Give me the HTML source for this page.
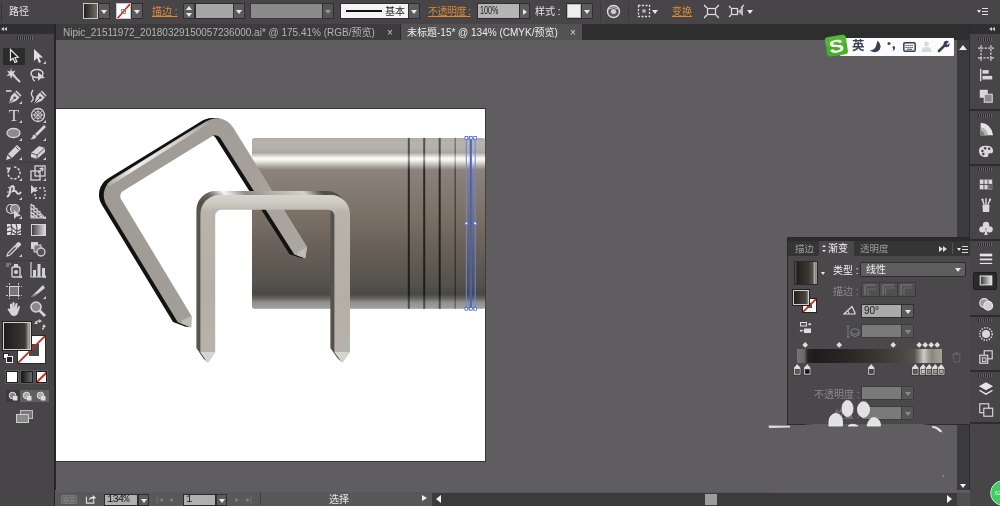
<!DOCTYPE html>
<html><head><meta charset="utf-8">
<style>
*{box-sizing:border-box;margin:0;padding:0}
html,body{width:1000px;height:506px;overflow:hidden;background:#5f5d60;font-family:"Liberation Sans","Noto Sans CJK SC",sans-serif;font-size:11px;color:#ddd}
.abs,#root div,#root span,#root svg,#root i{position:absolute}
#root{position:relative;width:1000px;height:506px;overflow:hidden;background:#5f5d60;transform:translateZ(0);will-change:transform}
#ctrl{left:0;top:0;width:1000px;height:24.500px;background:#474548;border-bottom:1px solid #2a2a2a}
#tabs{left:55px;top:24px;width:915px;height:16px;background:#2e2e2e}
#tabs span{top:0;height:16px;font-size:10px;line-height:17.500px;white-space:nowrap}
#tools{left:0;top:24px;width:55.500px;height:482px;background:#474548;border-right:2px solid #252525}
#dock{left:969px;top:24px;width:31px;height:482px;background:#474548;border-left:1px solid #2c2c2c}
#artboard{left:56px;top:108px;width:430px;height:354px;background:#fff;border:1px solid #353535;border-left:none}
.or{color:#dd8a33;text-decoration:underline;font-size:10px;white-space:nowrap}
.lb{color:#e4e4e4;font-size:10px;white-space:nowrap}
.fld{background:#a6a6a6;border:1px solid #2f2f2f}
.fldd{background:#8a8a8a;border:1px solid #3a3a3a}
.btn{background:#5c5c5c;border:1px solid #2f2f2f}
.td{width:0;height:0;border-left:3px solid transparent;border-right:3px solid transparent;border-top:4px solid #e8e8e8}
.tu{width:0;height:0;border-left:3px solid transparent;border-right:3px solid transparent;border-bottom:4px solid #e8e8e8}
.tr{width:0;height:0;border-top:3px solid transparent;border-bottom:3px solid transparent;border-left:4px solid #e8e8e8}
.tl{width:0;height:0;border-top:3px solid transparent;border-bottom:3px solid transparent;border-right:4px solid #e8e8e8}
.grip{height:3px;width:14px;background:repeating-linear-gradient(90deg,#2a2a2a 0 1px,#666 1px 2px)}
.sep{height:1px;background:#2c2c2c}
</style></head><body><div id="root">
<div id="artboard"></div>
<svg id="art" style="left:0;top:0" width="1000" height="506" viewBox="0 0 1000 506">
<defs>
 <linearGradient id="gcyl" x1="0" y1="0" x2="0" y2="1">
  <stop offset="0" stop-color="#b1aca8"/>
  <stop offset="0.03" stop-color="#b6b2ad"/>
  <stop offset="0.06" stop-color="#b4b0aa"/>
  <stop offset="0.086" stop-color="#a9a6a0"/>
  <stop offset="0.104" stop-color="#d6d4ce"/>
  <stop offset="0.12" stop-color="#fbfbf9"/>
  <stop offset="0.135" stop-color="#eeede8"/>
  <stop offset="0.15" stop-color="#cfccc4"/>
  <stop offset="0.172" stop-color="#a59e94"/>
  <stop offset="0.187" stop-color="#8b837c"/>
  <stop offset="0.47" stop-color="#796f65"/>
  <stop offset="0.77" stop-color="#5c5750"/>
  <stop offset="0.86" stop-color="#53524c"/>
  <stop offset="0.915" stop-color="#4b4743"/>
  <stop offset="0.94" stop-color="#666662"/>
  <stop offset="0.963" stop-color="#8f918c"/>
  <stop offset="0.99" stop-color="#9c9e99"/>
  <stop offset="1" stop-color="#9a9c97"/>
 </linearGradient>
 <linearGradient id="gline" x1="0" y1="0" x2="0" y2="1">
  <stop offset="0" stop-color="#55524e"/>
  <stop offset="0.086" stop-color="#504d49"/>
  <stop offset="0.12" stop-color="#9a9894"/>
  <stop offset="0.187" stop-color="#2c2926"/>
  <stop offset="0.915" stop-color="#1c1b1a"/>
  <stop offset="0.963" stop-color="#4a4a47"/>
  <stop offset="1" stop-color="#4d4d4a"/>
 </linearGradient>
 <linearGradient id="gtop" gradientUnits="userSpaceOnUse" x1="196" y1="0" x2="350" y2="0">
  <stop offset="0" stop-color="#5a5752"/>
  <stop offset="0.05" stop-color="#55524d"/>
  <stop offset="0.1" stop-color="#6a6864"/>
  <stop offset="0.2" stop-color="#f6f6f4"/>
  <stop offset="0.34" stop-color="#8c8b88"/>
  <stop offset="0.5" stop-color="#b0afab"/>
  <stop offset="0.72" stop-color="#d2d1ce"/>
  <stop offset="0.84" stop-color="#4c4b48"/>
  <stop offset="0.9" stop-color="#55524d"/>
  <stop offset="1" stop-color="#3a3937"/>
 </linearGradient>
 <linearGradient id="gfront" gradientUnits="userSpaceOnUse" x1="0" y1="195" x2="0" y2="363">
  <stop offset="0" stop-color="#d8d5cd"/>
  <stop offset="0.05" stop-color="#cdc9c1"/>
  <stop offset="0.1" stop-color="#b9b4ab"/>
  <stop offset="0.6" stop-color="#b4aea5"/>
  <stop offset="1" stop-color="#b9b4ab"/>
 </linearGradient>
 <path id="stf" d="M200.400 352 L200.400 214 A19 19 0 0 1 219.400 195 L331 195 A19 19 0 0 1 350 214 L350 352 L342.200 362.800 L334.400 352 L334.400 216.200 A6.500 6.500 0 0 0 327.900 209.700 L221.700 209.700 A6.500 6.500 0 0 0 215.200 216.200 L215.200 352 L207.800 362.800 L200.400 352 Z"/>
 <linearGradient id="gbk" gradientUnits="userSpaceOnUse" x1="100" y1="190" x2="300" y2="250">
  <stop offset="0" stop-color="#9f9a93"/>
  <stop offset="0.5" stop-color="#a29d96"/>
  <stop offset="1" stop-color="#aba69f"/>
 </linearGradient>
 <linearGradient id="ghl" gradientUnits="userSpaceOnUse" x1="104" y1="183" x2="210" y2="116">
  <stop offset="0" stop-color="#fff" stop-opacity="0.1"/>
  <stop offset="0.25" stop-color="#fff" stop-opacity="0.85"/>
  <stop offset="0.7" stop-color="#fff" stop-opacity="0.5"/>
  <stop offset="1" stop-color="#fff" stop-opacity="0"/>
 </linearGradient>
</defs>
<!-- cylinder -->
<rect x="252" y="137.900" width="233.200" height="170.900" rx="2.500" fill="url(#gcyl)"/>
<g fill="url(#gline)">
 <rect x="407.800" y="137.900" width="2" height="170.900"/>
 <rect x="423.200" y="137.900" width="2" height="170.900"/>
 <rect x="438.700" y="137.900" width="2" height="170.900"/>
 <rect x="454.600" y="137.900" width="1.200" height="170.900" opacity="0.75"/>
</g>
<!-- selected object -->
<g fill="none">
 <rect x="466.300" y="137.900" width="8.900" height="170.900" stroke="#6f88dc" stroke-width="1"/>
 <line x1="470.800" y1="137.900" x2="470.800" y2="308.800" stroke="#4462cc" stroke-width="2"/>
</g>
<g fill="#fff" stroke="#4a68cf" stroke-width="0.800">
 <rect x="465" y="136.500" width="2.800" height="2.800"/><rect x="469.400" y="136.500" width="2.800" height="2.800"/><rect x="473.800" y="136.500" width="2.800" height="2.800"/>
 <rect x="465" y="222" width="2.800" height="2.800"/><rect x="473.800" y="222" width="2.800" height="2.800"/>
 <rect x="465" y="307.400" width="2.800" height="2.800"/><rect x="469.400" y="307.400" width="2.800" height="2.800"/><rect x="473.800" y="307.400" width="2.800" height="2.800"/>
</g>
<!-- back staple -->
<g>
 <path d="M177.8 322.3 L106.5 205.0 A19.0 19.0 0 0 1 112.8 179.0 L206.9 121.1 A19.0 19.0 0 0 1 233.0 127.3 L307.0 246.7 L305.4 258.2 L294.3 254.6 L220.3 138.1 A6.0 6.0 0 0 0 212.1 136.2 L123.1 191.0 A6.0 6.0 0 0 0 121.1 199.2 L191.6 316.0 L191.2 327.4 Z" fill="#141313" transform="translate(-4.800 -0.400)"/>
 <path d="M177.8 322.3 L106.5 205.0 A19.0 19.0 0 0 1 112.8 179.0 L206.9 121.1 A19.0 19.0 0 0 1 233.0 127.3 L307.0 246.7 L305.4 258.2 L294.3 254.6 L220.3 138.1 A6.0 6.0 0 0 0 212.1 136.2 L123.1 191.0 A6.0 6.0 0 0 0 121.1 199.2 L191.6 316.0 L191.2 327.4 Z" fill="#141313" transform="translate(-3.200 -0.300)"/>
 <path d="M177.8 322.3 L106.5 205.0 A19.0 19.0 0 0 1 112.8 179.0 L206.9 121.1 A19.0 19.0 0 0 1 233.0 127.3 L307.0 246.7 L305.4 258.2 L294.3 254.6 L220.3 138.1 A6.0 6.0 0 0 0 212.1 136.2 L123.1 191.0 A6.0 6.0 0 0 0 121.1 199.2 L191.6 316.0 L191.2 327.4 Z" fill="#141313" transform="translate(-1.600 -0.100)"/>
 <path d="M177.8 322.3 L106.5 205.0 A19.0 19.0 0 0 1 112.8 179.0 L206.9 121.1 A19.0 19.0 0 0 1 233.0 127.3 L307.0 246.7 L305.4 258.2 L294.3 254.6 L220.3 138.1 A6.0 6.0 0 0 0 212.1 136.2 L123.1 191.0 A6.0 6.0 0 0 0 121.1 199.2 L191.6 316.0 L191.2 327.4 Z" fill="url(#gbk)"/>
 <path d="M191.6 316.0 L191.2 327.4 L181.2 323.6 L181.9 320.4 Z" fill="#bdbcb5"/>
 <path d="M307.0 246.7 L305.4 258.2 L297.1 255.5 L298.1 252.2 Z" fill="#bdbcb5"/>
 <path d="M108 185 L207 122.500" stroke="url(#ghl)" stroke-width="3.500" fill="none"/>
</g>
<!-- front staple -->
<g>
 <use href="#stf" fill="url(#gtop)" transform="translate(-4 -3.900)"/>
 <use href="#stf" fill="url(#gtop)" transform="translate(-3 -2.900)"/>
 <use href="#stf" fill="url(#gtop)" transform="translate(-2 -1.950)"/>
 <use href="#stf" fill="url(#gtop)" transform="translate(-1 -1)"/>
 <use href="#stf" fill="url(#gfront)"/>
 <path d="M200.400 352 L215.200 352 L207.800 362.800 Z" fill="#d6d4cd"/>
 <path d="M334.400 352 L350 352 L342.200 362.800 Z" fill="#d6d4cd"/>
</g>
</svg>
<!-- control bar -->
<div id="ctrl">
 <i style="left:1px;top:3px;width:1px;height:18px;background:#333"></i>
 <span class="lb" style="left:9px;top:2.500px">路径</span>
 <div style="left:83px;top:3px;width:15px;height:15.500px;border:1px solid #c8c8c8;background:linear-gradient(90deg,#23211f,#6f6c66)"></div>
 <div class="btn" style="left:98px;top:3px;width:12px;height:15.500px"><i class="td" style="left:2px;top:6px"></i></div>
 <div style="left:116px;top:3px;width:15px;height:15.500px;border:1px solid #c8c8c8;background:#fff;overflow:hidden"><svg width="13" height="15" style="left:0;top:0"><line x1="0" y1="15" x2="13" y2="0" stroke="#d8281e" stroke-width="1.6"/><rect x="4.500" y="5.500" width="4" height="4" fill="none" stroke="#777" stroke-width="0.8"/></svg></div>
 <div class="btn" style="left:131px;top:3px;width:12px;height:15.500px"><i class="td" style="left:2px;top:6px"></i></div>
 <span class="or" style="left:152px;top:3px">描边 :</span>
 <div class="btn" style="left:183px;top:3px;width:12px;height:15.500px"><i class="tu" style="left:2px;top:2px"></i><i class="td" style="left:2px;top:9px"></i></div>
 <div class="fld" style="left:195px;top:3px;width:39px;height:15.500px"></div>
 <div class="btn" style="left:233px;top:3px;width:12px;height:15.500px"><i class="td" style="left:2px;top:6px"></i></div>
 <div class="fldd" style="left:250px;top:3px;width:73px;height:15.500px"></div>
 <div class="btn" style="left:322px;top:3px;width:12px;height:15.500px;background:#555"><i class="td" style="left:2px;top:6px;border-top-color:#999"></i></div>
 <div style="left:340px;top:3px;width:69px;height:15.500px;background:#f4f4f4;border:1px solid #2f2f2f"><i style="left:4.500px;top:6px;width:36px;height:2px;background:#111"></i><span style="left:44px;top:0;font-size:10px;line-height:15px;color:#222">基本</span></div>
 <div class="btn" style="left:408px;top:3px;width:12px;height:15.500px"><i class="td" style="left:2px;top:6px"></i></div>
 <span class="or" style="left:428px;top:3px;letter-spacing:-0.500px">不透明度 :</span>
 <div class="fld" style="left:477px;top:3px;width:43px;height:15.500px;background:#b4b4b4"><span style="left:2px;top:0;font-size:10px;line-height:14px;color:#222;transform:scaleX(0.720);transform-origin:0 0">100%</span></div>
 <div class="btn" style="left:519px;top:3px;width:11px;height:15.500px"><i class="tr" style="left:3px;top:5px"></i></div>
 <span class="lb" style="left:535px;top:3px">样式 :</span>
 <div style="left:566px;top:3px;width:16px;height:15.500px;border:1px solid #2f2f2f;background:#eee;box-shadow:inset 0 0 0 1px #bbb"></div>
 <div class="btn" style="left:581px;top:3px;width:12px;height:15.500px"><i class="td" style="left:2px;top:6px"></i></div>
 <i style="left:600px;top:2px;width:1px;height:20px;background:#3a3a3a"></i>
 <svg style="left:606px;top:4px" width="15" height="15" viewBox="0 0 15 15"><circle cx="7.500" cy="7.500" r="6" fill="#5a5a5a" stroke="#ddd" stroke-width="1.400"/><circle cx="7.500" cy="7.500" r="2.600" fill="#ccc"/><path d="M3 5 Q7.500 2 12 5" stroke="#ddd" fill="none" stroke-width="0.800"/></svg>
 <i style="left:628px;top:2px;width:1px;height:20px;background:#3a3a3a"></i>
 <svg style="left:637px;top:4px" width="22" height="15" viewBox="0 0 22 15"><rect x="1.500" y="1.500" width="11" height="11" fill="none" stroke="#ddd" stroke-dasharray="2 1.500" stroke-width="1.300"/><circle cx="7" cy="7" r="2" fill="#aaa"/><path d="M15 6 L21 6 L18 10 Z" fill="#e8e8e8"/></svg>
 <span class="or" style="left:672px;top:3px;font-size:10px">变换</span>
 <svg style="left:704px;top:4px" width="15" height="15" viewBox="0 0 15 15"><rect x="3.500" y="4.500" width="8" height="6" fill="none" stroke="#ddd" stroke-width="1.200"/><path d="M0 1 L3 4 M15 1 L12 4 M0 14 L3 11 M15 14 L12 11" stroke="#ddd" stroke-width="1.400"/></svg>
 <svg style="left:728px;top:4px" width="26" height="15" viewBox="0 0 26 15"><rect x="3.500" y="4.500" width="6" height="6" fill="none" stroke="#ddd" stroke-width="1.200"/><path d="M9.500 7.500 L15 3 L15 12 Z" fill="#bbb"/><path d="M1 2 L3 4 M1 13 L3 11 M16 1 L13 4" stroke="#ddd" stroke-width="1.200"/><path d="M19 6 L25 6 L22 10 Z" fill="#e8e8e8"/></svg>
 <i class="td" style="left:977px;top:10px;border-left-width:2px;border-right-width:2px;border-top-width:3px"></i>
 <i style="left:982px;top:8px;width:6px;height:1px;background:#ddd;box-shadow:0 3px 0 #ddd,0 6px 0 #ddd"></i>
</div>

<!-- doc tabs -->
<div id="tabs">
 <div style="left:0;top:0;width:346px;height:16px;background:#3c3c3c;border-right:1px solid #2a2a2a"></div>
 <span style="left:8px;color:#b4b4b4">Nipic_21511972_20180329150057236000.ai* @ 175.41% (RGB/预览)</span>
 <span style="left:332px;color:#c8c8c8;font-size:10px">×</span>
 <div style="left:346px;top:0;width:181px;height:16px;background:#525252"></div>
 <span style="left:352px;color:#ececec">未标题-15* @ 134% (CMYK/预览)</span>
 <span style="left:515px;color:#d8d8d8;font-size:10px">×</span>
</div>
<!-- tools -->
<div id="tools">
<div style="left:0;top:0;width:53.500px;height:10px;background:#2f2e30"></div>
<i class="tl" style="left:1px;top:3px;border-top-width:2.5px;border-bottom-width:2.5px;border-right-width:3px;border-right-color:#ccc"></i><i class="tl" style="left:4px;top:3px;border-top-width:2.5px;border-bottom-width:2.500px;border-right-width:3px;border-right-color:#ccc"></i>
<i class="grip" style="left:17px;top:12px;width:16px;height:4px"></i>
<div style="left:3px;top:24px;width:22px;height:17px;background:#2b2b2b;border-radius:1px"></div>
<i class="sep" style="left:4px;top:138px;width:45px;background:#3c3c3c"></i>
<i class="sep" style="left:4px;top:236px;width:45px;background:#3c3c3c"></i>
<svg style="left:5.0px;top:23.0px" width="18" height="18" viewBox="0 0 18 18"><path d="M5.500 2.500 L5.500 13.500 L8 11.200 L10 15.500 L11.800 14.700 L10 10.500 L13.200 10.300 Z" fill="#1c1c1c" stroke="#e8e8e8" stroke-width="1.200"/></svg>
<svg style="left:29.0px;top:23.0px" width="18" height="18" viewBox="0 0 18 18"><path d="M5 2 L5 14 L8 11 L10 16 L12 15 L10 10.500 L14 10.500 Z" fill="#e0e0e0"/><path d="M17 14 L17 17 L14 17 Z" fill="#ccc"/></svg>
<svg style="left:5.0px;top:42.6px" width="18" height="18" viewBox="0 0 18 18"><path d="M8 8 L15 15" stroke="#d4d4d4" stroke-width="2"/><path d="M6 1 L7 4.500 L10.500 3.500 L8.500 6.500 L11 9 L7.500 8.500 L6 12 L5 8.500 L1.500 9 L4 6.500 L2 3.500 L5.200 4.500 Z" fill="#d4d4d4"/></svg>
<svg style="left:29.0px;top:42.6px" width="18" height="18" viewBox="0 0 18 18"><ellipse cx="8" cy="6.500" rx="6" ry="4" fill="none" stroke="#d4d4d4" stroke-width="1.500"/><path d="M4 9 Q3 13 6 14" fill="none" stroke="#d4d4d4" stroke-width="1.300"/><path d="M9 5 L9 14 L11.500 11.500 L16 11 Z" fill="#d4d4d4"/></svg>
<svg style="left:5.0px;top:63.3px" width="18" height="18" viewBox="0 0 18 18"><path d="M1 4 L6.5 4" stroke="#d4d4d4" stroke-width="1.6"/><path d="M4 16.500 L6 9 L11.500 3.500 L16.500 8.500 L11 14 Z" fill="#d4d4d4"/><path d="M10 5 L15 10" stroke="#555" stroke-width="1.200"/><path d="M4.500 16 L9 11.500" stroke="#444" stroke-width="1"/><circle cx="9.700" cy="10.800" r="1.300" fill="#444"/><path d="M17 14 L17 17 L14 17 Z" fill="#ccc"/></svg>
<svg style="left:29.0px;top:63.3px" width="18" height="18" viewBox="0 0 18 18"><path d="M4 3 Q1 7 3.500 9.500 Q5.500 12 2 15" fill="none" stroke="#d4d4d4" stroke-width="1.300"/><path d="M5.500 16.500 L7.500 9 L13 3.500 L17.500 8.500 L12.500 14 Z" fill="#d4d4d4"/><path d="M11.500 5 L16 10" stroke="#555" stroke-width="1.200"/><path d="M6 16 L10.500 11.500" stroke="#444" stroke-width="1"/><circle cx="11.200" cy="10.800" r="1.300" fill="#444"/></svg>
<svg style="left:5.0px;top:81.7px" width="18" height="18" viewBox="0 0 18 18"><text x="9" y="15" font-family="Liberation Serif,serif" font-size="17" text-anchor="middle" fill="#d8d8d8">T</text><path d="M17 14 L17 17 L14 17 Z" fill="#ccc"/></svg>
<svg style="left:29.0px;top:81.7px" width="18" height="18" viewBox="0 0 18 18"><circle cx="9" cy="9" r="6.500" fill="none" stroke="#d4d4d4" stroke-width="1.300"/><circle cx="9" cy="9" r="3.500" fill="none" stroke="#d4d4d4" stroke-width="1"/><path d="M9 2.500 L9 15.500 M2.500 9 L15.500 9 M4.500 4.500 L13.500 13.500 M13.500 4.500 L4.500 13.500" stroke="#d4d4d4" stroke-width="0.800"/><path d="M17 14 L17 17 L14 17 Z" fill="#ccc"/></svg>
<svg style="left:5.0px;top:100.4px" width="18" height="18" viewBox="0 0 18 18"><ellipse cx="8.500" cy="9" rx="6.500" ry="4.500" fill="#8a8a8a" stroke="#d4d4d4" stroke-width="1.300"/><path d="M17 14 L17 17 L14 17 Z" fill="#ccc"/></svg>
<svg style="left:29.0px;top:100.4px" width="18" height="18" viewBox="0 0 18 18"><path d="M15 1 L17 3 L8 12 L6 10 Z" fill="#d4d4d4"/><path d="M5.500 10.500 L7.500 12.500 Q6 16 1 15 Q4 14 3.500 12 Q4 10.500 5.500 10.500 Z" fill="#d4d4d4"/><path d="M17 14 L17 17 L14 17 Z" fill="#ccc"/></svg>
<svg style="left:5.0px;top:118.6px" width="18" height="18" viewBox="0 0 18 18"><path d="M12 2 L16 6 L7 15 L3 11 Z" fill="#d4d4d4"/><path d="M2.500 12 L6 15.500 L1 17 Z" fill="#d4d4d4"/><path d="M11 4 L14 7" stroke="#555" stroke-width="1"/><path d="M17 14 L17 17 L14 17 Z" fill="#ccc"/></svg>
<svg style="left:29.0px;top:118.6px" width="18" height="18" viewBox="0 0 18 18"><path d="M2 10 L10 3 L16 5 L16 9 L8 16 L2 14 Z" fill="#d4d4d4"/><path d="M2 10 L8 12 L16 5 M8 12 L8 16" stroke="#555" stroke-width="1" fill="none"/><path d="M17 14 L17 17 L14 17 Z" fill="#ccc"/></svg>
<svg style="left:5.0px;top:140.4px" width="18" height="18" viewBox="0 0 18 18"><path d="M9 3 A6 6 0 1 1 3.500 6.500" fill="none" stroke="#d4d4d4" stroke-width="1.500" stroke-dasharray="2.500 1.500"/><path d="M1 3.500 L6 3.500 L4 8 Z" fill="#d4d4d4"/><path d="M17 14 L17 17 L14 17 Z" fill="#ccc"/></svg>
<svg style="left:29.0px;top:140.4px" width="18" height="18" viewBox="0 0 18 18"><rect x="2" y="7" width="9" height="9" fill="none" stroke="#d4d4d4" stroke-width="1.300"/><rect x="6" y="2" width="10" height="10" fill="none" stroke="#d4d4d4" stroke-width="1.300"/><path d="M9 9 L14 4 M14 4 L10.500 4.500 M14 4 L13.500 7.500" stroke="#d4d4d4" stroke-width="1.200"/><path d="M17 14 L17 17 L14 17 Z" fill="#ccc"/></svg>
<svg style="left:5.0px;top:159.0px" width="18" height="18" viewBox="0 0 18 18"><path d="M2 14 Q5 12 5 8 Q5 3 8 3 Q10 5 8 8 Q11 7 12 10 Q14 12 16 9" fill="none" stroke="#d4d4d4" stroke-width="2"/><path d="M3 4 L6 6 M2 9 L5 9" stroke="#d4d4d4" stroke-width="1"/><path d="M17 14 L17 17 L14 17 Z" fill="#ccc"/></svg>
<svg style="left:29.0px;top:159.0px" width="18" height="18" viewBox="0 0 18 18"><rect x="6" y="5" width="10" height="10" fill="none" stroke="#d4d4d4" stroke-width="1.300" stroke-dasharray="2 2"/><path d="M2 2 L2 11 L4.500 8.500 L9 8 Z" fill="#d4d4d4"/></svg>
<svg style="left:5.0px;top:178.0px" width="18" height="18" viewBox="0 0 18 18"><circle cx="6" cy="7" r="4.500" fill="none" stroke="#d4d4d4" stroke-width="1.200"/><circle cx="10" cy="7" r="4.500" fill="#8a8a8a" stroke="#d4d4d4" stroke-width="1.200"/><path d="M9 8 L9 17 L11.500 14.500 L16 14 Z" fill="#d4d4d4"/><path d="M17 14 L17 17 L14 17 Z" fill="#ccc"/></svg>
<svg style="left:29.0px;top:178.0px" width="18" height="18" viewBox="0 0 18 18"><path d="M2 2 L2 16 L16 16 M5 3 L5 16 M8 6 L8 16 M11 9 L11 16 M2 6 L14 16 M2 10 L9 16 M2 13 L5.500 16 M2 2 L16 16" stroke="#d4d4d4" stroke-width="1.100" fill="none"/><path d="M17 14 L17 17 L14 17 Z" fill="#ccc"/></svg>
<svg style="left:5.0px;top:197.4px" width="18" height="18" viewBox="0 0 18 18"><rect x="2" y="3" width="14" height="11" fill="#e0e0e0"/><path d="M2 7 Q6 4 9 8 T16 8 M2 11 Q6 9 9 12 T16 11 M6 3 Q8 8 6 14 M11 3 Q13 8 11 14" stroke="#444" stroke-width="1.100" fill="none"/></svg>
<svg style="left:29.0px;top:197.4px" width="18" height="18" viewBox="0 0 18 18"><defs><linearGradient id="tg"><stop offset="0" stop-color="#3a3a3a"/><stop offset="1" stop-color="#e0e0e0"/></linearGradient></defs><rect x="2.500" y="3.500" width="14" height="11" fill="url(#tg)" stroke="#d4d4d4" stroke-width="1"/></svg>
<svg style="left:5.0px;top:216.0px" width="18" height="18" viewBox="0 0 18 18"><path d="M13 2 Q16 2 16 5 L13 8 L10 5 Z" fill="#d4d4d4"/><path d="M10 6 L12 8 L5 15 L2 16 L3 13 Z" fill="none" stroke="#d4d4d4" stroke-width="1.300"/><path d="M17 14 L17 17 L14 17 Z" fill="#ccc"/></svg>
<svg style="left:29.0px;top:216.0px" width="18" height="18" viewBox="0 0 18 18"><rect x="2" y="2" width="7" height="7" fill="#d4d4d4"/><rect x="5" y="5" width="7" height="7" fill="#777" stroke="#d4d4d4" stroke-width="1"/><circle cx="12" cy="12" r="4" fill="#555" stroke="#d4d4d4" stroke-width="1.300"/></svg>
<svg style="left:5.0px;top:237.3px" width="18" height="18" viewBox="0 0 18 18"><rect x="7" y="6" width="8" height="10" rx="1" fill="none" stroke="#d4d4d4" stroke-width="1.400"/><rect x="9" y="3" width="4" height="3" fill="#d4d4d4"/><circle cx="11" cy="11" r="2" fill="#d4d4d4"/><path d="M1 3 L6 3 M1 5 L4 5" stroke="#aaa" stroke-width="1.200"/><path d="M17 14 L17 17 L14 17 Z" fill="#ccc"/></svg>
<svg style="left:29.0px;top:237.3px" width="18" height="18" viewBox="0 0 18 18"><path d="M2 1 L2 16 L17 16" stroke="#d4d4d4" stroke-width="1.200" fill="none"/><rect x="4" y="9" width="3" height="7" fill="#d4d4d4"/><rect x="8.500" y="3" width="3" height="13" fill="#d4d4d4"/><rect x="13" y="7" width="3" height="9" fill="#d4d4d4"/><path d="M17 14 L17 17 L14 17 Z" fill="#ccc"/></svg>
<svg style="left:5.0px;top:258.0px" width="18" height="18" viewBox="0 0 18 18"><rect x="4.500" y="4.500" width="9" height="9" fill="#777" stroke="#d4d4d4" stroke-width="1"/><path d="M4.500 1 L4.500 17 M13.500 1 L13.500 17 M1 4.500 L17 4.500 M1 13.500 L17 13.500" stroke="#d4d4d4" stroke-width="0.900" stroke-dasharray="2 1"/></svg>
<svg style="left:29.0px;top:258.0px" width="18" height="18" viewBox="0 0 18 18"><path d="M2 15 L14 3 L16 6 L6 14 Z" fill="#d4d4d4"/><path d="M2 15 L8 12" stroke="#666" stroke-width="1"/><path d="M17 14 L17 17 L14 17 Z" fill="#ccc"/></svg>
<svg style="left:5.0px;top:276.0px" width="18" height="18" viewBox="0 0 18 18"><path d="M5 9 L5 4 Q6 3 7 4 L7 8 L7.500 2.500 Q8.500 1.500 9.500 2.500 L9.500 8 L10.500 3.500 Q11.500 2.500 12.500 3.500 L12 9 L13.500 6 Q15 5.500 15 7 L13 13 Q12 16 9 16 Q6 16 5 13 L2.500 9.500 Q3.500 8 5 9 Z" fill="#d4d4d4"/></svg>
<svg style="left:29.0px;top:276.0px" width="18" height="18" viewBox="0 0 18 18"><circle cx="7" cy="7" r="5" fill="#8a8a8a" stroke="#d4d4d4" stroke-width="1.600"/><path d="M10.500 10.500 L16 16" stroke="#d4d4d4" stroke-width="2.600"/></svg>
<div style="left:16.5px;top:311px;width:29px;height:29px;background:#fff;border:1px solid #2a2a2a"><i style="left:11px;top:8px;width:10px;height:12px;background:#4a4a4a"></i><svg style="left:0;top:0" width="27" height="27"><line x1="0" y1="27" x2="27" y2="0" stroke="#c8281e" stroke-width="1.800"/></svg></div>
<div style="left:3px;top:298px;width:28px;height:28px;border:1px solid #d0d0d0;background:linear-gradient(90deg,#1f1d1b 0,#3a3835 80%,#6a6762 88%,#aaa69e 94%,#8a867f 100%);box-shadow:0 0 0 1px #222"></div>
<svg style="left:34px;top:295px" width="12" height="12" viewBox="0 0 12 12"><path d="M2 4 Q2 2 5 2 M8 10 Q10 10 10 7" stroke="#ccc" fill="none" stroke-width="1.300"/><path d="M5 0 L5 4 L8 2 Z M10 5 L8 8 L12 8 Z" fill="#ccc"/><path d="M0 5 L4 5 L2 2 Z" fill="#ccc"/></svg>
<div style="left:3px;top:329px;width:6px;height:6px;background:#fff;border:1px solid #222"></div><div style="left:6px;top:332px;width:7px;height:7px;background:#222;border:1px solid #eee"></div>
<div style="left:6px;top:347px;width:11.500px;height:11.500px;background:#fff;border:1px solid #1e1e1e;box-shadow:0 0 0 1px #5a5a5a"></div>
<div style="left:21px;top:347px;width:11.500px;height:11.500px;background:linear-gradient(90deg,#1a1a1a,#6a6a6a);border:1px solid #1e1e1e;box-shadow:0 0 0 1px #5a5a5a"></div>
<div style="left:35.500px;top:347px;width:11.500px;height:11.500px;background:#fff;border:1px solid #1e1e1e;box-shadow:0 0 0 1px #5a5a5a;overflow:hidden"><svg style="left:0;top:0" width="10" height="10"><line x1="0" y1="10" x2="10" y2="0" stroke="#d8281e" stroke-width="2"/></svg></div>
<div style="left:6px;top:365.500px;width:43px;height:12px;background:#606060;border-radius:1px"></div><div style="left:6px;top:365.500px;width:14px;height:12px;background:#3a3a3a"></div>
<svg style="left:8px;top:366.500px" width="10" height="10" viewBox="0 0 10 10"><circle cx="4.500" cy="4.500" r="3.300" fill="#888" stroke="#ddd" stroke-width="1"/><rect x="5" y="5" width="4.500" height="4.500" fill="#ddd"/></svg>
<svg style="left:22px;top:366.500px" width="10" height="10" viewBox="0 0 10 10"><circle cx="4.500" cy="4.500" r="3.300" fill="#aaa" stroke="#ddd" stroke-width="1"/><rect x="5" y="5" width="4.500" height="4.500" fill="#ddd"/></svg>
<svg style="left:36px;top:366.500px" width="10" height="10" viewBox="0 0 10 10"><circle cx="4.500" cy="4.500" r="3.300" fill="#aaa" stroke="#ddd" stroke-width="1"/><rect x="5" y="5" width="4.500" height="4.500" fill="#ddd"/></svg>
<div style="left:20px;top:386px;width:13px;height:9px;background:#777;border:1px solid #bbb"></div><div style="left:16px;top:390px;width:13px;height:9px;background:#8a8a8a;border:1px solid #ccc"></div>
</div>
<!-- right dock -->
<div id="dock">
<div style="left:0;top:0;width:30px;height:10px;background:#2f2e30"></div>
<i class="tl" style="left:19px;top:3px;border-top-width:2.500px;border-bottom-width:2.500px;border-right-width:3px;border-right-color:#ccc"></i><i class="tl" style="left:22px;top:3px;border-top-width:2.500px;border-bottom-width:2.500px;border-right-width:3px;border-right-color:#ccc"></i>
<div style="left:3px;top:247.500px;width:24px;height:18px;background:#2a2a2a;border:1px solid #1e1e1e;border-radius:2px"></div>
<i class="grip" style="left:8px;top:13.5px"></i>
<svg style="left:7.5px;top:21.0px" width="16" height="16" viewBox="0 0 18 18"><rect x="3.500" y="3.500" width="11" height="11" fill="none" stroke="#d8d8d8" stroke-width="1.400" stroke-dasharray="2.500 1.500"/><path d="M3.500 0 L3.500 3 M14.500 0 L14.500 3 M3.500 15 L3.500 18 M14.500 15 L14.500 18 M0 3.500 L3 3.500 M15 3.500 L18 3.500 M0 14.500 L3 14.500 M15 14.500 L18 14.500" stroke="#d8d8d8" stroke-width="1.200"/></svg>
<svg style="left:7.5px;top:42.5px" width="16" height="16" viewBox="0 0 18 18"><path d="M3 2 L3 16" stroke="#d8d8d8" stroke-width="1.500"/><rect x="5" y="3.500" width="7" height="4" fill="#d8d8d8"/><rect x="5" y="10" width="11" height="4" fill="#d8d8d8"/></svg>
<svg style="left:7.5px;top:64.0px" width="16" height="16" viewBox="0 0 18 18"><rect x="2" y="2" width="9" height="9" fill="#d8d8d8"/><rect x="7" y="7" width="9" height="9" fill="#8a8a8a" stroke="#d8d8d8" stroke-width="1.200"/></svg>
<i class="sep" style="left:0;top:84.7px;width:30px;height:2px;background:#2c2c2c"></i>
<i class="grip" style="left:8px;top:89.5px"></i>
<svg style="left:7.5px;top:97.0px" width="16" height="16" viewBox="0 0 18 18"><path d="M3 16 L3 2 Q15 3 17 16 Z" fill="#e4e4e4"/><path d="M3 16 L3 7 Q10 8 11.500 16 Z" fill="#b4b4b4"/><path d="M3 16 L3 11 Q6.500 11.500 7.500 16 Z" fill="#7c7c7c"/></svg>
<svg style="left:7.5px;top:118.5px" width="16" height="16" viewBox="0 0 18 18"><path d="M9 3 Q17 3 17 9 Q17 12 13 11.500 Q11 11.500 11.500 13.500 Q12 16 8 16 Q1 15 1 9 Q1 3 9 3 Z" fill="#d8d8d8"/><circle cx="5" cy="9" r="1.400" fill="#444"/><circle cx="8" cy="6" r="1.400" fill="#444"/><circle cx="12.500" cy="6.500" r="1.400" fill="#444"/><circle cx="6" cy="12.500" r="1.400" fill="#444"/></svg>
<i class="sep" style="left:0;top:139.7px;width:30px;height:2px;background:#2c2c2c"></i>
<i class="grip" style="left:8px;top:143.9px"></i>
<svg style="left:7.5px;top:151.7px" width="16" height="16" viewBox="0 0 18 18"><rect x="2" y="4" width="14" height="11" fill="#d8d8d8"/><path d="M2 9.500 L16 9.500 M6.700 4 L6.700 15 M11.300 4 L11.300 15" stroke="#444" stroke-width="1"/><rect x="11.800" y="10" width="4" height="4.500" fill="#666"/></svg>
<svg style="left:7.5px;top:173.0px" width="16" height="16" viewBox="0 0 18 18"><path d="M5 9 L13 9 L12.500 17 L5.500 17 Z" fill="#d8d8d8"/><path d="M7 9 L5 3 M9 9 L9 1.500 M11 9 L13.500 3" stroke="#d8d8d8" stroke-width="1.600"/><circle cx="5" cy="3" r="1.300" fill="#d8d8d8"/><circle cx="13.500" cy="3" r="1.300" fill="#d8d8d8"/></svg>
<svg style="left:7.5px;top:195.8px" width="16" height="16" viewBox="0 0 18 18"><circle cx="9" cy="5.500" r="3.600" fill="#d8d8d8"/><circle cx="5" cy="10.500" r="3.600" fill="#d8d8d8"/><circle cx="13" cy="10.500" r="3.600" fill="#d8d8d8"/><path d="M9 9 L7 17 L11 17 Z" fill="#d8d8d8"/></svg>
<i class="sep" style="left:0;top:215.0px;width:30px;height:2px;background:#2c2c2c"></i>
<i class="grip" style="left:8px;top:219.0px"></i>
<svg style="left:7.5px;top:226.5px" width="16" height="16" viewBox="0 0 18 18"><path d="M2 4.500 L16 4.500" stroke="#e4e4e4" stroke-width="3"/><path d="M2 9.500 L16 9.500" stroke="#e4e4e4" stroke-width="2"/><path d="M2 14 L16 14" stroke="#e4e4e4" stroke-width="1.300"/></svg>
<svg style="left:7.5px;top:248.0px" width="16" height="16" viewBox="0 0 18 18"><defs><linearGradient id="dg"><stop offset="0" stop-color="#333"/><stop offset="1" stop-color="#eee"/></linearGradient></defs><rect x="2.500" y="4.500" width="13" height="10" fill="url(#dg)" stroke="#e4e4e4" stroke-width="1.200"/></svg>
<svg style="left:7.5px;top:271.5px" width="16" height="16" viewBox="0 0 18 18"><circle cx="7" cy="8" r="5" fill="#9a9a9a" stroke="#e4e4e4" stroke-width="1.300"/><circle cx="11.500" cy="11" r="5" fill="#cfcfcf" stroke="#e4e4e4" stroke-width="1.300"/></svg>
<i class="sep" style="left:0;top:291.4px;width:30px;height:2px;background:#2c2c2c"></i>
<i class="grip" style="left:8px;top:294.5px"></i>
<svg style="left:7.5px;top:302.4px" width="16" height="16" viewBox="0 0 18 18"><circle cx="9" cy="9" r="4.500" fill="#d8d8d8"/><circle cx="9" cy="9" r="7" fill="none" stroke="#d8d8d8" stroke-width="1.800" stroke-dasharray="1.500 1.500"/></svg>
<svg style="left:7.5px;top:325.0px" width="16" height="16" viewBox="0 0 18 18"><rect x="7" y="2" width="9" height="9" fill="none" stroke="#d8d8d8" stroke-width="1.300"/><rect x="2" y="7" width="9" height="9" fill="#555" stroke="#d8d8d8" stroke-width="1.300"/><rect x="5" y="10" width="4" height="4" fill="none" stroke="#d8d8d8" stroke-width="1"/></svg>
<i class="sep" style="left:0;top:346.0px;width:30px;height:2px;background:#2c2c2c"></i>
<i class="grip" style="left:8px;top:349.5px"></i>
<svg style="left:7.5px;top:357.0px" width="16" height="16" viewBox="0 0 18 18"><path d="M9 1.500 L17 6 L9 10.500 L1 6 Z" fill="#e4e4e4"/><path d="M2.500 10 L9 13.800 L15.500 10 L17 11 L9 15.800 L1 11 Z" fill="#e4e4e4"/></svg>
<svg style="left:7.5px;top:378.3px" width="16" height="16" viewBox="0 0 18 18"><rect x="2" y="2" width="10" height="10" fill="none" stroke="#d8d8d8" stroke-width="1.300"/><rect x="6.500" y="7" width="10" height="9" fill="#474747" stroke="#d8d8d8" stroke-width="1.300"/></svg>
<i class="sep" style="left:0;top:398.0px;width:30px;height:2px;background:#2c2c2c"></i>
</div>
<!-- gradient panel -->
<div id="gp" style="z-index:2;left:787px;top:237px;width:183px;height:188px;background:#4a484b;border:1px solid #2a2a2a;border-right:none">
 <div style="left:0;top:0;width:182px;height:3px;background:#2b2b2b"></div>
 <div style="left:0;top:3px;width:182px;height:15px;background:#353535"></div>
 <div style="left:31px;top:3px;width:35px;height:15px;background:#4a484b"></div>
 <span style="left:7px;top:4px;font-size:9.500px;line-height:13px;color:#9c9c9c;white-space:nowrap">描边</span>
 <i class="tu" style="left:34px;top:7px;border-left-width:2px;border-right-width:2px;border-bottom-width:2.500px"></i><i class="td" style="left:34px;top:11.500px;border-left-width:2px;border-right-width:2px;border-top-width:2.500px"></i>
 <span style="left:40px;top:4px;font-size:10px;line-height:13px;color:#f0f0f0;white-space:nowrap">渐变</span>
 <span style="left:72px;top:4px;font-size:9.500px;line-height:13px;color:#9c9c9c;white-space:nowrap">透明度</span>
 <i class="tr" style="left:151px;top:8px;border-left-color:#ddd"></i><i class="tr" style="left:155px;top:8px;border-left-color:#ddd"></i>
 <i style="left:164px;top:5px;width:1px;height:11px;background:#555"></i>
 <i class="td" style="left:169px;top:10px;border-left-width:2px;border-right-width:2px;border-top-width:3px"></i>
 <i style="left:174px;top:8px;width:6px;height:1px;background:#ddd;box-shadow:0 3px 0 #ddd,0 6px 0 #ddd"></i>

 <div style="left:6px;top:23px;width:24px;height:24px;border:1px solid #2a2a2a;background:linear-gradient(90deg,#5a5854 0,#22201e 10%,#3a3733 60%,#57544e 82%,#b5b2aa 88%,#8a867e 93%,#9a968e 100%)"></div>
 <i class="td" style="left:33px;top:34px;border-left-width:2.500px;border-right-width:2.500px;border-top-width:3px"></i>
 <span class="lb" style="left:45px;top:24px;color:#f0f0f0">类型 :</span>
 <div style="left:72px;top:24px;width:106px;height:15px;background:#5e5e5e;border:1px solid #2c2c2c;border-radius:2px"><span style="left:5px;top:0;font-size:10px;line-height:13px;color:#f0f0f0">线性</span><i class="td" style="left:94px;top:5px"></i></div>
 <span class="lb" style="left:45px;top:45px;color:#8a8a8a">描边 :</span>
 <div style="left:73px;top:44px;width:55px;height:15px;background:#505050;border:1px solid #3a3a3a"></div>
 <svg style="left:73px;top:44px" width="55" height="15" viewBox="0 0 55 15"><g fill="none" stroke="#7a7a7a" stroke-width="1.200"><path d="M4 13 L4 5 Q4 3 6 3 L15 3"/><path d="M7 13 L7 7 L15 7" stroke="#6a6a6a"/><path d="M22 13 L22 5 Q22 3 24 3 L33 3"/><path d="M24.500 13 L24.500 6 L33 6" stroke="#6a6a6a"/><path d="M40 13 L40 3 L51 3"/><path d="M43 13 L43 6 L51 6" stroke="#6a6a6a"/></g><path d="M18.500 0 L18.500 15 M36.500 0 L36.500 15" stroke="#3a3a3a"/></svg>
 <div style="left:14px;top:60px;width:15px;height:15px;background:#fff;border:1px solid #222;overflow:hidden"><svg style="left:0;top:0" width="13" height="13"><rect x="4" y="4" width="5" height="5" fill="#555"/><line x1="0" y1="13" x2="13" y2="0" stroke="#d8281e" stroke-width="1.800"/></svg></div>
 <div style="left:5px;top:52px;width:16px;height:15px;border:1px solid #ccc;box-shadow:0 0 0 1px #222;background:linear-gradient(90deg,#22201e,#4a4743 85%,#8a867e)"></div>
 <svg style="left:55px;top:67px" width="13" height="10" viewBox="0 0 13 10"><path d="M1 9 L12 9 L12 8 L9 1.500 Z" fill="none" stroke="#ddd" stroke-width="1.200"/><path d="M6 9 Q6 6.500 4.500 5.500" fill="none" stroke="#ddd" stroke-width="1"/></svg>
 <div class="fld" style="left:73px;top:66px;width:41px;height:14px;background:#aaa"><span style="left:2px;top:0;font-size:10px;line-height:12px;color:#1a1a1a">90°</span></div>
 <div class="btn" style="left:113px;top:66px;width:13px;height:14px"><i class="td" style="left:2.500px;top:4.500px"></i></div>
 <svg style="left:11px;top:83px" width="13" height="13" viewBox="0 0 13 13"><rect x="1.500" y="1.500" width="6" height="3.500" fill="#555" stroke="#ddd" stroke-width="1"/><rect x="5.500" y="8" width="6" height="3.500" fill="#ddd" stroke="#ddd" stroke-width="1"/><path d="M9 3.200 L12 3.200 M1 9.700 L4.500 9.700" stroke="#ddd" stroke-width="1"/><path d="M10.500 1.700 L12.500 3.200 L10.500 4.700 Z M2.500 8.200 L0.500 9.700 L2.500 11.200 Z" fill="#ddd"/></svg>
 <svg style="left:58px;top:87px" width="14" height="13" viewBox="0 0 14 13"><path d="M2 1 L2 12 M0.500 1 L3.500 1 M0.500 12 L3.500 12" stroke="#7c7c7c" stroke-width="1"/><ellipse cx="9" cy="6.500" rx="4" ry="2.800" fill="none" stroke="#7c7c7c" stroke-width="1"/><path d="M5 6.500 L5 10 Q9 13 13 10 L13 6.500" fill="none" stroke="#7c7c7c" stroke-width="1"/></svg>
 <div class="fldd" style="left:73px;top:86px;width:41px;height:14px;background:#7a7a7a;border-color:#3c3c3c"></div>
 <div class="btn" style="left:113px;top:86px;width:13px;height:14px;background:#555;border-color:#3c3c3c"><i class="td" style="left:2.500px;top:4.500px;border-top-color:#8a8a8a"></i></div>

 <div style="left:8.500px;top:111.300px;width:145px;height:13.800px;background:linear-gradient(90deg,#777471 0,#6a6764 5%,#242220 7.500%,#1f1d1b 12%,#292624 35%,#37332f 52%,#4a4540 72%,#57534d 81%,#8a867f 84%,#cfcdc6 87.500%,#a39f97 90.500%,#8a857d 93%,#9a958d 96%,#a5a098 100%)"></div>
<i style="left:14.6px;top:104.6px;width:4.400px;height:4.400px;background:#e0e0e0;transform:rotate(45deg)"></i>
<i style="left:49.2px;top:104.6px;width:4.400px;height:4.400px;background:#e0e0e0;transform:rotate(45deg)"></i>
<i style="left:102.8px;top:104.6px;width:4.400px;height:4.400px;background:#e0e0e0;transform:rotate(45deg)"></i>
<i style="left:129.2px;top:104.6px;width:4.400px;height:4.400px;background:#e0e0e0;transform:rotate(45deg)"></i>
<i style="left:135.4px;top:104.6px;width:4.400px;height:4.400px;background:#e0e0e0;transform:rotate(45deg)"></i>
<i style="left:140.8px;top:104.6px;width:4.400px;height:4.400px;background:#e0e0e0;transform:rotate(45deg)"></i>
<i style="left:147.4px;top:104.6px;width:4.400px;height:4.400px;background:#e0e0e0;transform:rotate(45deg)"></i>
<svg style="left:5.3px;top:125.2px" width="8.400" height="12.600" viewBox="0 0 8 12"><path d="M4 0.500 L7.500 4.500 L7.500 11.500 L0.500 11.500 L0.500 4.500 Z" fill="#dcdcdc" stroke="#2a2a2a" stroke-width="0.700"/><rect x="2" y="6" width="4" height="4" fill="#5e5c59" stroke="#333" stroke-width="0.600"/></svg>
<svg style="left:14.7px;top:125.2px" width="8.400" height="12.600" viewBox="0 0 8 12"><path d="M4 0.500 L7.500 4.500 L7.500 11.500 L0.500 11.500 L0.500 4.500 Z" fill="#dcdcdc" stroke="#2a2a2a" stroke-width="0.700"/><rect x="2" y="6" width="4" height="4" fill="#161514" stroke="#333" stroke-width="0.600"/></svg>
<svg style="left:79.4px;top:125.2px" width="8.400" height="12.600" viewBox="0 0 8 12"><path d="M4 0.500 L7.500 4.500 L7.500 11.500 L0.500 11.500 L0.500 4.500 Z" fill="#dcdcdc" stroke="#2a2a2a" stroke-width="0.700"/><rect x="2" y="6" width="4" height="4" fill="#4a4642" stroke="#333" stroke-width="0.600"/></svg>
<svg style="left:123.0px;top:125.2px" width="8.400" height="12.600" viewBox="0 0 8 12"><path d="M4 0.500 L7.500 4.500 L7.500 11.500 L0.500 11.500 L0.500 4.500 Z" fill="#dcdcdc" stroke="#2a2a2a" stroke-width="0.700"/><rect x="2" y="6" width="4" height="4" fill="#5f5b55" stroke="#333" stroke-width="0.600"/></svg>
<svg style="left:131.4px;top:125.2px" width="8.400" height="12.600" viewBox="0 0 8 12"><path d="M4 0.500 L7.500 4.500 L7.500 11.500 L0.500 11.500 L0.500 4.500 Z" fill="#dcdcdc" stroke="#2a2a2a" stroke-width="0.700"/><rect x="2" y="6" width="4" height="4" fill="#c0beb8" stroke="#333" stroke-width="0.600"/></svg>
<svg style="left:136.5px;top:125.2px" width="8.400" height="12.600" viewBox="0 0 8 12"><path d="M4 0.500 L7.500 4.500 L7.500 11.500 L0.500 11.500 L0.500 4.500 Z" fill="#dcdcdc" stroke="#2a2a2a" stroke-width="0.700"/><rect x="2" y="6" width="4" height="4" fill="#8a857d" stroke="#333" stroke-width="0.600"/></svg>
<svg style="left:143.0px;top:125.2px" width="8.400" height="12.600" viewBox="0 0 8 12"><path d="M4 0.500 L7.500 4.500 L7.500 11.500 L0.500 11.500 L0.500 4.500 Z" fill="#dcdcdc" stroke="#2a2a2a" stroke-width="0.700"/><rect x="2" y="6" width="4" height="4" fill="#9a958d" stroke="#333" stroke-width="0.600"/></svg>
<svg style="left:149.2px;top:125.2px" width="8.400" height="12.600" viewBox="0 0 8 12"><path d="M4 0.500 L7.500 4.500 L7.500 11.500 L0.500 11.500 L0.500 4.500 Z" fill="#dcdcdc" stroke="#2a2a2a" stroke-width="0.700"/><rect x="2" y="6" width="4" height="4" fill="#a5a098" stroke="#333" stroke-width="0.600"/></svg>
<svg style="left:163px;top:113px" width="11" height="12" viewBox="0 0 11 12"><path d="M2 3.500 L2.800 11 L8.200 11 L9 3.500 Z M1 3 L10 3 M4 3 L4 1.500 L7 1.500 L7 3" fill="none" stroke="#626262" stroke-width="1"/></svg>
<span class="lb" style="left:26px;top:148px;color:#8a8a8a">不透明度 :</span>
<div class="fldd" style="left:73px;top:148px;width:41px;height:14px;background:#7a7a7a;border-color:#3c3c3c"></div>
<div class="btn" style="left:113px;top:148px;width:13px;height:14px;background:#555;border-color:#3c3c3c"><i class="td" style="left:2.500px;top:4.500px;border-top-color:#8a8a8a"></i></div>
<span class="lb" style="left:46px;top:168px;color:#8a8a8a">位置 :</span>
<div class="fldd" style="left:73px;top:168px;width:41px;height:14px;background:#7a7a7a;border-color:#3c3c3c"></div>
<div class="btn" style="left:113px;top:168px;width:13px;height:14px;background:#555;border-color:#3c3c3c"><i class="td" style="left:2.500px;top:4.500px;border-top-color:#8a8a8a"></i></div>
</div>
<!-- vertical scrollbar -->
<div style="left:957px;top:40px;width:12px;height:453px;background:#3b3b3d"></div>
<i class="tu" style="left:959px;top:44.500px;border-left-width:4px;border-right-width:4px;border-bottom-width:5px;border-bottom-color:#f0f0f0"></i>
<!-- IME toolbar -->
<div style="left:840px;top:37.700px;width:114px;height:18.200px;background:#fcfcfc;border-radius:1px"></div>
<svg style="left:822px;top:32px" width="28" height="28" viewBox="0 0 28 28"><g transform="rotate(-9 14 14)"><rect x="4" y="4" width="21" height="19.500" rx="3" fill="#45b02a"/><rect x="4" y="4" width="21" height="9" rx="3" fill="#5cc238" opacity="0.600"/><text x="0" y="0" transform="translate(14.500 20.500) scale(1.250 1)" text-anchor="middle" font-family="Liberation Sans,sans-serif" font-weight="bold" font-size="18" fill="#fff">S</text></g></svg>
<span style="left:852px;top:38px;font-size:12.500px;line-height:17px;color:#3a3f55;font-weight:bold">英</span>
<svg style="left:869px;top:40px" width="13" height="13" viewBox="0 0 13 13"><path d="M8.500 0.500 Q13.500 5 10.500 10 Q7 14 0.800 10.500 Q5.500 10 6.800 6.500 Q7.800 3.500 8.500 0.500 Z" fill="#3a3f55"/></svg>
<svg style="left:887px;top:41px" width="10" height="11" viewBox="0 0 10 11"><circle cx="2" cy="2.500" r="1.500" fill="#3a3f55"/><path d="M6 5 Q8.500 5 8 7.500 Q7.500 9.500 5.500 10 Q7 8.500 6 7.500 Q5 6.500 6 5 Z" fill="#3a3f55"/></svg>
<svg style="left:903px;top:41.500px" width="13" height="10" viewBox="0 0 13 10"><rect x="0.800" y="0.800" width="11.400" height="8.400" rx="1.200" fill="#eef0f4" stroke="#3a3f55" stroke-width="1.500"/><path d="M2.500 3.500 L10.500 3.500 M2.500 5.500 L10.500 5.500" stroke="#3a3f55" stroke-width="1.200" stroke-dasharray="1.200 0.800"/><path d="M4 7.300 L9 7.300" stroke="#3a3f55" stroke-width="0.900"/></svg>
<svg style="left:921px;top:41px" width="11" height="12" viewBox="0 0 11 12"><circle cx="5.500" cy="3" r="2.400" fill="#cfded8"/><path d="M0.500 11 Q0.500 6 5.500 6 Q10.500 6 10.500 11 Z" fill="#cfded8"/></svg>
<svg style="left:937px;top:40px" width="13" height="13" viewBox="0 0 13 13"><path d="M2 11 L7.500 5.500" stroke="#3a3f55" stroke-width="2.600" stroke-linecap="round"/><path d="M7 2 Q9.500 0 12 1.500 L9.500 4 L10.500 5 L12.500 3 Q13 6 10.500 7 Q8 7.500 7 6 Q6 4 7 2 Z" fill="#3a3f55"/></svg>

<!-- status bar -->
<div id="status" style="left:55px;top:490px;width:915px;height:16px;background:linear-gradient(#5f5d60 0,#5f5d60 1.500px,#58585a 2.500px)">
 <svg style="left:6px;top:5px" width="16" height="9" viewBox="0 0 16 9"><rect x="0.500" y="0.500" width="15" height="8" rx="1" fill="#6a6a6a" stroke="#777" stroke-width="1"/><circle cx="5" cy="4.500" r="2" fill="none" stroke="#8a8a8a"/><path d="M9 3 L13 3 M9 6 L13 6" stroke="#8a8a8a"/></svg>
 <svg style="left:30px;top:4px" width="12" height="10" viewBox="0 0 12 11"><path d="M1 3 L1 10 L9 10 L9 7" fill="none" stroke="#ddd" stroke-width="1.300"/><path d="M3.500 7 Q4 3 8 3 L8 1 L11.500 4 L8 7 L8 5 Q5.500 5 3.500 7 Z" fill="#ddd"/></svg>
 <div style="left:49px;top:4px;width:34px;height:11.500px;background:#b0b0b0;border:1px solid #2c2c2c"><span style="left:2px;top:-1px;font-family:'Liberation Mono',monospace;font-size:10.500px;line-height:11.500px;color:#1a1a1a;letter-spacing:-0.900px">134%</span></div>
 <div class="btn" style="left:83px;top:4px;width:11px;height:11.500px"><i class="td" style="left:1.500px;top:4px"></i></div>
 <span style="left:101px;top:3.500px;font-size:8px;line-height:12px;color:#7e7e7e;letter-spacing:1px">|◂</span>
 <span style="left:114px;top:3.500px;font-size:8px;line-height:12px;color:#7e7e7e">◂</span>
 <div style="left:128px;top:4px;width:33px;height:11.500px;background:#b0b0b0;border:1px solid #2c2c2c"><span style="left:2px;top:-1px;font-family:'Liberation Mono',monospace;font-size:10.500px;line-height:11.500px;color:#1a1a1a">1</span></div>
 <div class="btn" style="left:161px;top:4px;width:11px;height:11.500px"><i class="td" style="left:1.500px;top:4px"></i></div>
 <span style="left:180px;top:3.500px;font-size:8px;line-height:12px;color:#7e7e7e">▸</span>
 <span style="left:191px;top:3.500px;font-size:8px;line-height:12px;color:#7e7e7e;letter-spacing:0">▸|</span>
 <i style="left:205px;top:2px;width:1px;height:13px;background:#3e3e3e"></i>
 <span style="left:274px;top:2.500px;font-size:10px;line-height:14px;color:#e8e8e8;white-space:nowrap">选择</span>
 <i class="tr" style="left:367px;top:4.500px;border-top-width:3.500px;border-bottom-width:3.500px;border-left-width:5px;border-left-color:#f0f0f0"></i>
 <div style="left:377px;top:3px;width:525px;height:13px;background:#3b3b3d"></div>
 <i class="tl" style="left:381px;top:5px;border-top-width:4px;border-bottom-width:4px;border-right-width:5px;border-right-color:#f4f4f4"></i>
 <i class="tr" style="left:892px;top:5px;border-top-width:4px;border-bottom-width:4px;border-left-width:5px;border-left-color:#f4f4f4"></i>
 <div style="left:650px;top:4px;width:12px;height:11px;background:#9c9c9c"></div>
 <div style="left:902px;top:3px;width:13px;height:13px;background:#4f4f50"></div>
</div>
<!-- watermark smear -->
<svg style="z-index:3;left:760px;top:395px" width="210" height="105" viewBox="760 395 210 105">
 <path d="M768 426.500 L790 426.300 L800 425.800 Q806 424.300 814 424 L922 424 Q930 425 934 426.500 Q945 428 946 432 L957 433 L957 492.500 L790 492.500 Q772 494 768 490 Z" fill="#5f5d60"/>
 <path d="M768.500 425.500 L790 425.800 L790 427.500 L769 428 Z" fill="#dcdcdc"/>
 <path d="M932 426 Q940 426.500 942.500 432.500 L939 431.500 Q937 428.500 932 427.500 Z" fill="#e4e4e4"/>
 <path d="M942 476 l1.500 -1.500 l1.200 1.200 l-1.500 1.500 Z" fill="#8a8a8c"/>
 <g fill="#e2e2e2" stroke="#f4f4f4" stroke-width="0.800">
  <ellipse cx="847.500" cy="408.500" rx="5.500" ry="8"/>
  <ellipse cx="863.500" cy="409.500" rx="6" ry="7.800"/>
  <path d="M829 426 Q828 414 836 413.500 Q843.500 414 842.500 426 Z"/>
  <path d="M867 426 Q869 417.500 874 417.500 Q880.500 418.500 880.500 426 Z"/>
  <path d="M848 426 Q852 422.500 858 426 Z"/>
 </g>
</svg>
<i class="td" style="z-index:4;left:959.800px;top:483.500px;border-left-width:3.500px;border-right-width:3.500px;border-top-width:4.500px;border-top-color:#f4f4f4"></i>
<!-- green circle -->
<svg style="z-index:5;left:985px;top:476px" width="15" height="30" viewBox="985 476 15 30"><circle cx="1003" cy="493" r="12.300" fill="#3fcf5c" stroke="#c4f0cc" stroke-width="1"/><text x="998" y="495" font-size="6" fill="#d8ffd8" text-anchor="middle" font-family="Liberation Sans,sans-serif">62</text></svg>

</div></body></html>
